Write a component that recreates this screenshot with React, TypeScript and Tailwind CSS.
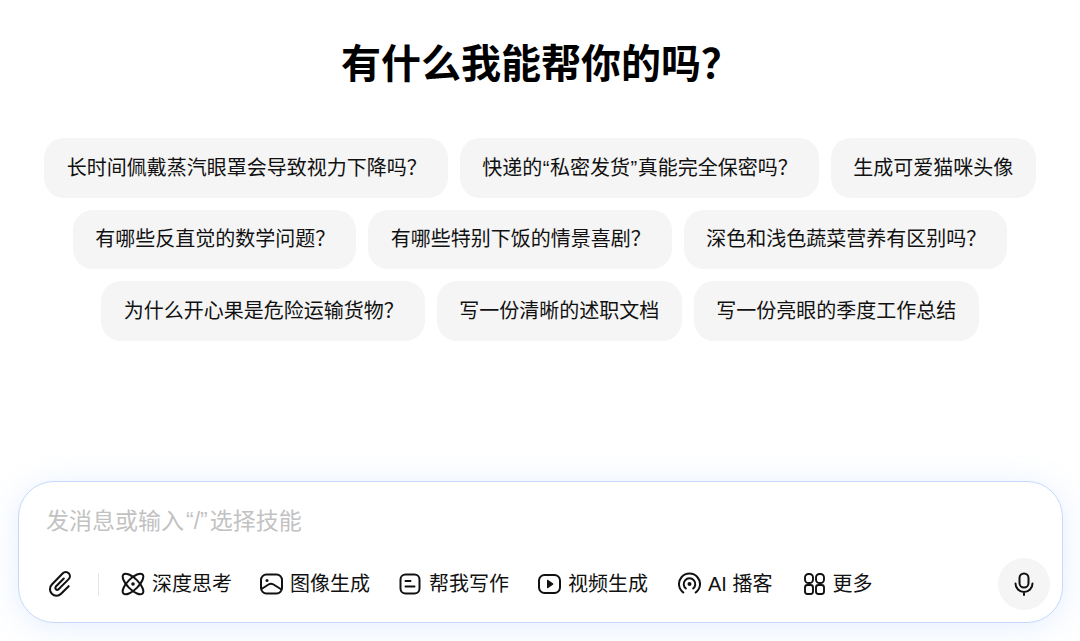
const rows = [
  ['长时间佩戴蒸汽眼罩会导致视力下降吗', '快递的“私密发货”真能完全保密吗', '生成可爱猫咪头像'],
  ['有哪些反直觉的数学问题', '有哪些特别下饭的情景喜剧', '深色和浅色蔬菜营养有区别吗'],
  ['为什么开心果是危险运输货物', '写一份清晰的述职文档', '写一份亮眼的季度工作总结'],
];

// these three chips have no question mark in the picture
const noMark = ['生成可爱猫咪头像', '写一份清晰的述职文档', '写一份亮眼的季度工作总结'];

function PaperclipIcon() {
  return (
    <svg width="26" height="26" viewBox="0 0 24 24" fill="none" stroke="currentColor" strokeWidth="1.900" strokeLinecap="round">
      <path d="M15.500 7 8 14.500a1.800 1.800 0 0 0 2.500 2.500L20 7.500a3.800 3.800 0 0 0-5.400-5.400L4.500 12.500a6 6 0 0 0 8.500 8.500L20 14" />
    </svg>
  );
}

function AtomIcon() {
  return (
    <svg width="24" height="24" viewBox="0 0 24 24" fill="none" stroke="currentColor" strokeWidth="2">
      <ellipse cx="12" cy="12" rx="13.500" ry="5.500" transform="rotate(45 12 12)" />
      <ellipse cx="12" cy="12" rx="13.500" ry="5.500" transform="rotate(-45 12 12)" />
      <circle cx="12" cy="12" r="1.800" fill="currentColor" stroke="none" />
    </svg>
  );
}

function ImageIcon() {
  return (
    <svg width="24" height="24" viewBox="0 0 24 24" fill="none" stroke="currentColor" strokeWidth="2">
      <rect x="2" y="2.500" width="21" height="19" rx="5.500" />
      <path d="M2.500 17 9.500 12.500c1.800-1 3.200-1 5 0l8 5" />
      <circle cx="8" cy="8.500" r="1.500" fill="currentColor" stroke="none" />
    </svg>
  );
}

function WriteIcon() {
  return (
    <svg width="24" height="24" viewBox="0 0 24 24" fill="none" stroke="currentColor" strokeWidth="2" strokeLinecap="round">
      <rect x="2.500" y="2.500" width="19" height="19" rx="5" />
      <path d="M7.500 9h5M7.500 14.500h9" />
    </svg>
  );
}

function VideoIcon() {
  return (
    <svg width="24" height="24" viewBox="0 0 24 24" fill="none" stroke="currentColor" strokeWidth="2">
      <rect x="2" y="3" width="21" height="18" rx="5.500" />
      <path d="M10 8.200v7.600a.5.5 0 0 0 .8.400l5.400-3.800a.5.5 0 0 0 0-.8l-5.400-3.800a.5.5 0 0 0-.8.400Z" fill="currentColor" stroke="none" />
    </svg>
  );
}

function PodcastIcon() {
  return (
    <svg width="24" height="24" viewBox="0 0 24 24" fill="none" stroke="currentColor" strokeWidth="2">
      <path d="M7 21a10.500 10.500 0 1 1 11 0" />
      <path d="M9.500 17a5.800 5.800 0 1 1 6 0" />
      <circle cx="12.500" cy="12" r="2" fill="currentColor" stroke="none" />
    </svg>
  );
}

function GridIcon() {
  return (
    <svg width="24" height="24" viewBox="0 0 24 24" fill="none" stroke="currentColor" strokeWidth="1.900">
      <rect x="4" y="2" width="8" height="9" rx="3.500" />
      <rect x="15" y="2" width="8" height="9" rx="3.500" />
      <rect x="4" y="13" width="8" height="9" rx="2.500" />
      <rect x="15" y="13" width="8" height="9" rx="2.500" />
    </svg>
  );
}

function MicIcon() {
  return (
    <svg width="24" height="24" viewBox="0 0 24 24" fill="none" stroke="currentColor" strokeWidth="2" strokeLinecap="round">
      <rect x="7.500" y="1.500" width="9" height="14" rx="4.500" />
      <path d="M3.500 11.500a8.500 8.500 0 0 0 17 0M12 20v3" />
    </svg>
  );
}

const tools = [
  { label: '深度思考', icon: <AtomIcon />, cls: 'ml-[22px]' },
  { label: '图像生成', icon: <ImageIcon />, cls: 'ml-[27px]' },
  { label: '帮我写作', icon: <WriteIcon />, cls: 'ml-[28px]' },
  { label: '视频生成', icon: <VideoIcon />, cls: 'ml-[28px]' },
  { label: 'AI 播客', icon: <PodcastIcon />, cls: 'ml-[29px]' },
  { label: '更多', icon: <GridIcon />, cls: 'ml-[29px]' },
];

// the quote marks sit a little wider apart than the font sets them
function ChipText({ text }: { text: string }) {
  const parts = text.split(/(“|”)/);
  return (
    <span>
      {parts.map((p, i) => (p === '“' || p === '”' ? <span key={i} className="px-[0.5px]">{p}</span> : p))}
      {!noMark.includes(text) && <span className="tracking-[-1.5px]">？</span>}
    </span>
  );
}

export default function App() {
  return (
    <div className="h-[641px] overflow-hidden bg-white text-black flex flex-col font-['Liberation_Sans','Noto_Sans_CJK_SC',sans-serif]">
      <h1 className="pt-[37px] text-center text-[40px] leading-[54px] font-bold">
        有什么我能帮你的吗<span className="tracking-[-2px]">？</span>
      </h1>

      <div className="mt-[47px] flex flex-col items-center gap-[12px]">
        {rows.map((row, i) => (
          <div key={i} className="flex justify-center gap-[12px]">
            {row.map((text) => (
              <div key={text} className="h-[59.5px] px-[22.5px] flex items-center rounded-[20px] bg-[#f5f5f5] text-[20px] whitespace-nowrap text-[#111]">
                <ChipText text={text} />
              </div>
            ))}
          </div>
        ))}
      </div>

      <div className="mt-[140.5px] ml-[18px] mr-[17px] h-[142px] rounded-[36px] border border-[#c6d9fb] bg-white pl-[27px] pr-[12px] shadow-[0_4px_32px_rgba(90,150,255,0.16)]">
        <div className="pt-[23px] text-[23px] leading-[32px] text-[#c2c2c2]">
          发消息或输入<span className="px-[2px]">“/”</span>选择技能
        </div>
        <div className="mt-[21px] flex items-center">
          <div className="ml-[1px] text-[#111]">
            <PaperclipIcon />
          </div>
          <div className="ml-[25px] h-[23px] w-px bg-[#e6e6e6]" />
          {tools.map((tool) => (
            <div key={tool.label} className={`flex items-center gap-[7px] text-[20px] leading-[28px] whitespace-nowrap text-[#111] ${tool.cls}`}>
              {tool.icon}
              <span>{tool.label}</span>
            </div>
          ))}
          <div className="ml-auto w-[52px] h-[52px] rounded-full bg-[#f5f5f5] flex items-center justify-center text-[#111]">
            <MicIcon />
          </div>
        </div>
      </div>
    </div>
  );
}
